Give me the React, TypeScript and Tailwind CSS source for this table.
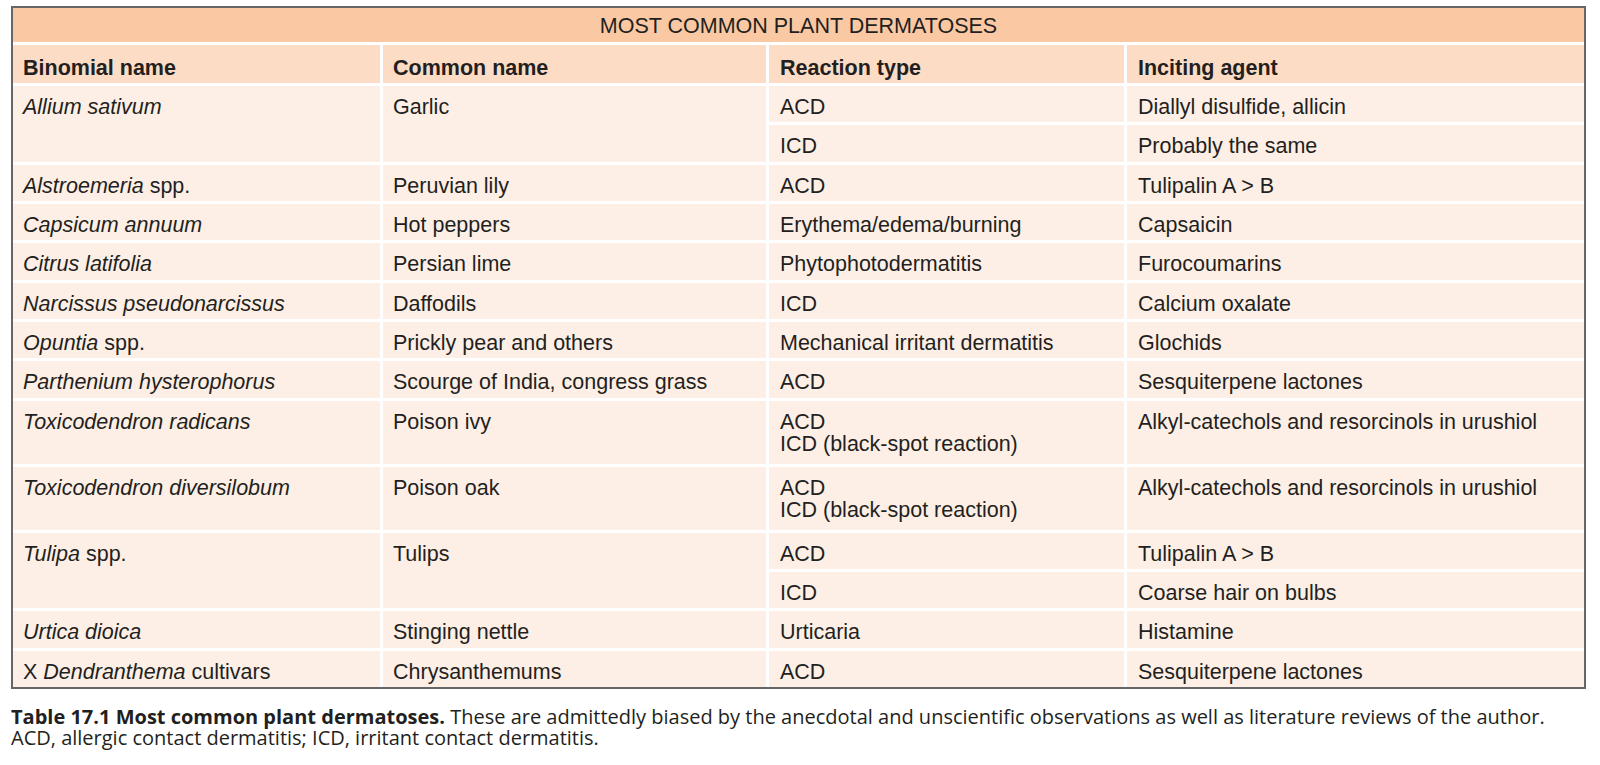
import React from "react";

const rows: { c1: React.ReactNode; c2: React.ReactNode; c3: React.ReactNode[]; c4: React.ReactNode[] }[] = [
  { c1: <i>Allium sativum</i>, c2: "Garlic", c3: ["ACD", "ICD"], c4: ["Diallyl disulfide, allicin", "Probably the same"] },
  { c1: <><i>Alstroemeria</i> spp.</>, c2: "Peruvian lily", c3: ["ACD"], c4: ["Tulipalin A > B"] },
  { c1: <i>Capsicum annuum</i>, c2: "Hot peppers", c3: ["Erythema/edema/burning"], c4: ["Capsaicin"] },
  { c1: <i>Citrus latifolia</i>, c2: "Persian lime", c3: ["Phytophotodermatitis"], c4: ["Furocoumarins"] },
  { c1: <i>Narcissus pseudonarcissus</i>, c2: "Daffodils", c3: ["ICD"], c4: ["Calcium oxalate"] },
  { c1: <><i>Opuntia</i> spp.</>, c2: "Prickly pear and others", c3: ["Mechanical irritant dermatitis"], c4: ["Glochids"] },
  { c1: <i>Parthenium hysterophorus</i>, c2: "Scourge of India, congress grass", c3: ["ACD"], c4: ["Sesquiterpene lactones"] },
  {
    c1: <i>Toxicodendron radicans</i>,
    c2: "Poison ivy",
    c3: [<>ACD<br />ICD (black-spot reaction)</>],
    c4: ["Alkyl-catechols and resorcinols in urushiol"],
  },
  {
    c1: <i>Toxicodendron diversilobum</i>,
    c2: "Poison oak",
    c3: [<>ACD<br />ICD (black-spot reaction)</>],
    c4: ["Alkyl-catechols and resorcinols in urushiol"],
  },
  { c1: <><i>Tulipa</i> spp.</>, c2: "Tulips", c3: ["ACD", "ICD"], c4: ["Tulipalin A > B", "Coarse hair on bulbs"] },
  { c1: <i>Urtica dioica</i>, c2: "Stinging nettle", c3: ["Urticaria"], c4: ["Histamine"] },
  { c1: <>X <i>Dendranthema</i> cultivars</>, c2: "Chrysanthemums", c3: ["ACD"], c4: ["Sesquiterpene lactones"] },
];

const body = "bg-[#fdefe6] pl-[10px] pt-[10px] leading-[22px] whitespace-nowrap";
const head = "bg-[#fcdcc5] pt-[12px] text-[21.5px] font-bold leading-[22px] whitespace-nowrap";

export default function App() {
  const cells: React.ReactNode[] = [];
  rows.forEach((r, i) => {
    const split = r.c3.length === 2;
    cells.push(
      <div key={`a${i}`} className={`${body} ${split ? "row-span-2" : ""}`}>
        {r.c1}
      </div>
    );
    cells.push(
      <div key={`b${i}`} className={`${body} ${split ? "row-span-2" : ""}`}>
        {r.c2}
      </div>
    );
    r.c3.forEach((c, j) => {
      cells.push(
        <div key={`c${i}-${j}`} className={`${body} pl-[11px]`}>
          {c}
        </div>
      );
      cells.push(
        <div key={`d${i}-${j}`} className={`${body} pl-[11px]`}>
          {r.c4[j]}
        </div>
      );
    });
  });

  return (
    <div className="min-h-[765px] w-[1600px] bg-white pl-[11px] pt-[6px] text-[#231f20]">
      <div className="w-[1575px] border-2 border-[#666666] bg-white font-['Liberation_Sans',Arial,sans-serif] text-[21.5px]">
        <div className="grid grid-cols-[367px_383px_355px_457px] grid-rows-[34px_38px_repeat(8,36.35px)_63px_63px_repeat(4,36.35px)] gap-[3px]">
          <div className="col-span-4 bg-[#fac9a3] pt-[7px] text-center leading-[22px]">
            MOST COMMON PLANT DERMATOSES
          </div>
          <div className={`${head} pl-[10px]`}>Binomial name</div>
          <div className={`${head} pl-[10px]`}>Common name</div>
          <div className={`${head} pl-[11px]`}>Reaction type</div>
          <div className={`${head} pl-[11px]`}>Inciting agent</div>
          {cells}
        </div>
      </div>
      <div className="mt-[18px] font-['Open_Sans',sans-serif] text-[20px] leading-[20.5px] text-[#231f20]">
        <div className="whitespace-nowrap">
          <span className="font-bold">Table 17.1 Most common plant dermatoses.</span> These are admittedly biased by the
          anecdotal and unscientific observations as well as literature reviews of the author.
        </div>
        <div className="whitespace-nowrap">ACD, allergic contact dermatitis; ICD, irritant contact dermatitis.</div>
      </div>
    </div>
  );
}
